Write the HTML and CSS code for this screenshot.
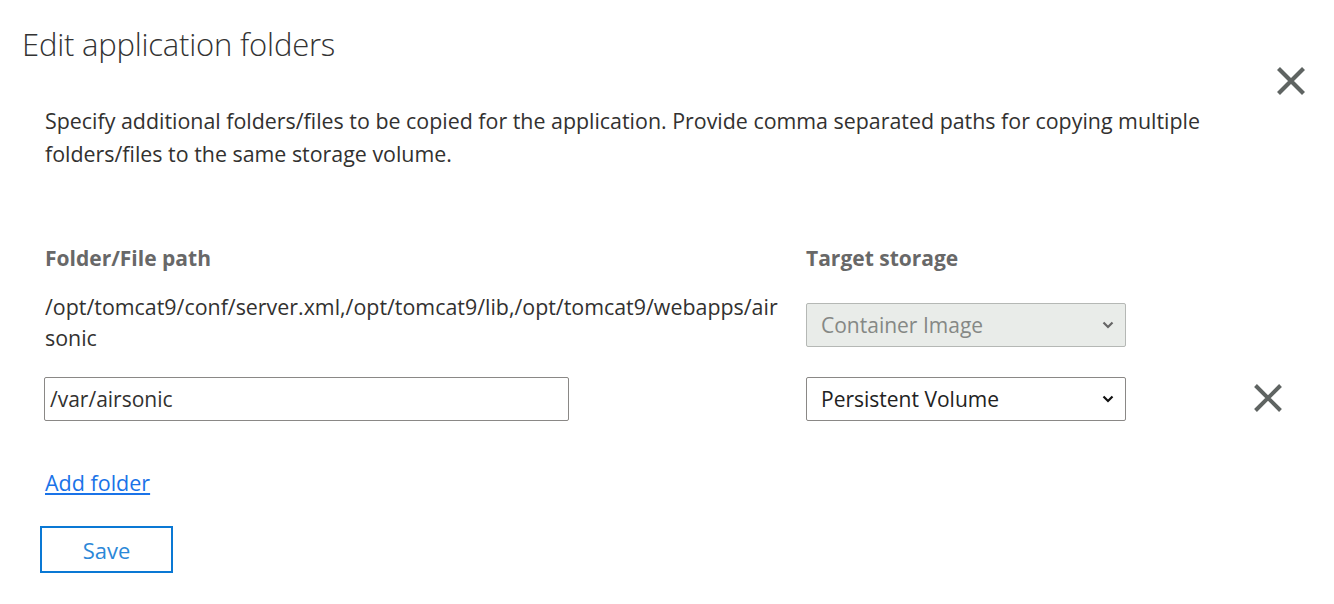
FILE: index.html
```html
<!DOCTYPE html>
<html>
<head>
<meta charset="utf-8">
<link rel="stylesheet" href="styles.css">
</head>
<body>
<div class="dialog">
  <div class="header">
    <h1 class="title">Edit application folders</h1>
    <button class="close-btn" aria-label="Close">
      <svg width="30" height="30" viewBox="0 0 30 30"><path d="M2.5 2.5 L27.5 27.5 M27.5 2.5 L2.5 27.5" stroke="#5f6462" stroke-width="4.2" fill="none"/></svg>
    </button>
  </div>
  <p class="desc">Specify additional folders/files to be copied for the application. Provide comma separated paths for copying multiple folders/files to the same storage volume.</p>
  <div class="grid">
    <div class="th">Folder/File path</div>
    <div class="th">Target storage</div>
    <div></div>

    <div class="path">/opt/tomcat9/conf/server.xml,/opt/tomcat9/lib,/opt/tomcat9/webapps/airsonic</div>
    <div class="select disabled"><span>Container Image</span><svg class="chev" width="12" height="8" viewBox="0 0 12 8"><path d="M1.5 1.5 L6 6 L10.5 1.5" stroke="#666" stroke-width="2.2" fill="none"/></svg></div>
    <div></div>

    <div class="input">/var/airsonic</div>
    <div class="select"><span>Persistent Volume</span><svg class="chev" width="12" height="8" viewBox="0 0 12 8"><path d="M1.5 1.5 L6 6 L10.5 1.5" stroke="#111" stroke-width="2.2" fill="none"/></svg></div>
    <button class="remove-btn" aria-label="Remove">
      <svg width="30" height="30" viewBox="0 0 30 30"><path d="M2.5 2.5 L27.5 27.5 M27.5 2.5 L2.5 27.5" stroke="#5f6462" stroke-width="4" fill="none"/></svg>
    </button>
  </div>
  <a class="add-link" href="#">Add folder</a>
  <button class="save-btn">Save</button>
</div>
</body>
</html>
```

FILE: styles.css
```css
html, body {
  margin: 0;
  padding: 0;
  background: #fff;
}
body {
  font-family: "Open Sans", "Noto Sans", sans-serif;
  color: #323130;
}
.dialog {
  position: relative;
  width: 1334px;
  height: 604px;
  box-sizing: border-box;
}
.header {
  padding: 0 0 0 22px;
}
.title {
  margin: 0;
  padding-top: 24px;
  font-size: 31px;
  font-weight: 300;
  line-height: 40px;
  color: #333;
  letter-spacing: -0.2px;
}
.close-btn {
  position: absolute;
  top: 66px;
  right: 28px;
  padding: 0;
  border: none;
  background: none;
  width: 30px;
  height: 30px;
  display: flex;
}
.desc {
  margin: 40px 0 0 45px;
  width: 1190px;
  font-size: 21.4px;
  line-height: 33px;
  color: #323130;
}
.grid {
  display: grid;
  grid-template-columns: 740px 320px 142px;
  column-gap: 21px;
  row-gap: 0;
  margin: 75px 0 0 45px;
  align-items: start;
}
.th {
  font-weight: 700;
  font-size: 21px;
  color: #686868;
  line-height: 26px;
  margin-bottom: 20px;
}
.path {
  max-width: 737px;
  font-size: 21.4px;
  line-height: 31px;
  color: #323130;
  word-break: break-all;
  margin-bottom: 24px;
}
.select {
  box-sizing: border-box;
  height: 44px;
  border: 1px solid #8a8886;
  border-radius: 2px;
  display: flex;
  align-items: center;
  justify-content: space-between;
  padding: 0 11px 0 14px;
  font-size: 21px;
  color: #222;
  background: #fff;
}
.select.disabled {
  margin-top: 12px;
  background: #e9ece9;
  border-color: #b5b8b5;
  color: #858885;
}
.input {
  box-sizing: border-box;
  width: 525px;
  height: 44px;
  border: 1px solid #8a8886;
  border-radius: 2px;
  margin-left: -1px;
  display: flex;
  align-items: center;
  padding: 0 5px;
  font-size: 21px;
  color: #323130;
}
.remove-btn {
  margin: 6px 0 0 106px;
  padding: 0;
  border: none;
  background: none;
  width: 30px;
  height: 30px;
  display: flex;
}
.add-link {
  display: block;
  width: max-content;
  margin: 49px 0 0 45px;
  font-size: 21.5px;
  line-height: 26px;
  color: #1a73e8;
  text-decoration: underline;
}
.save-btn {
  display: block;
  margin: 30px 0 0 40px;
  width: 133px;
  height: 47px;
  border: 2px solid #0a78d4;
  background: #fff;
  color: #2b88d8;
  font-family: "Open Sans", "Noto Sans", sans-serif;
  font-size: 22px;
  padding: 0;
}
```
